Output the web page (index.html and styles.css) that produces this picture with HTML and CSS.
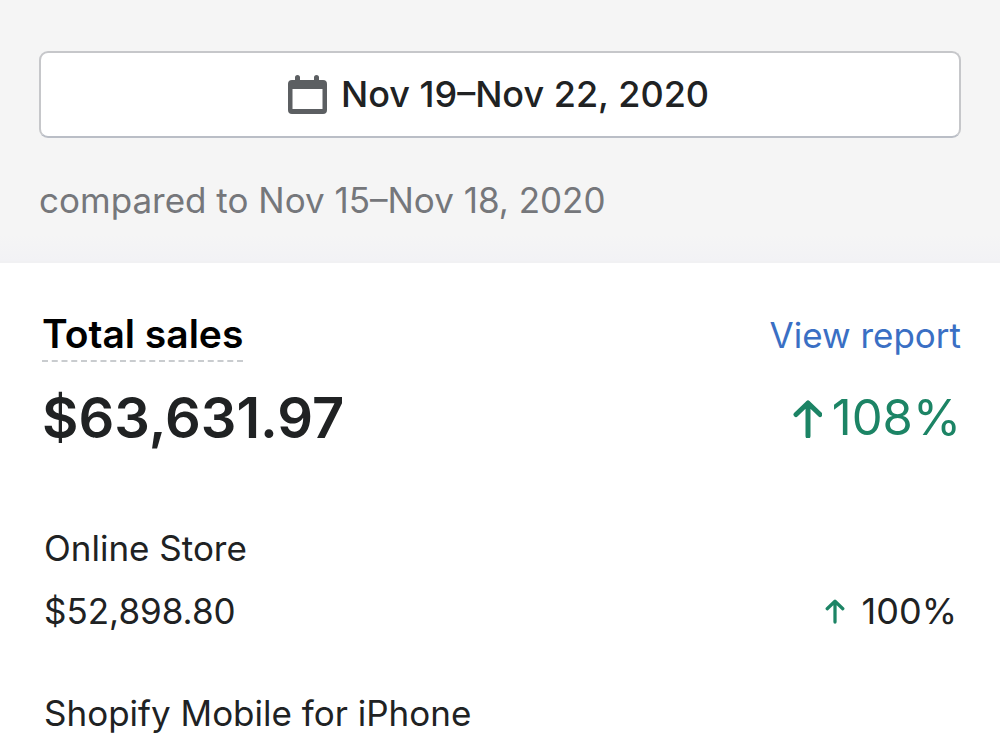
FILE: index.html
```html
<!DOCTYPE html>
<html lang="en">
<head>
    <meta charset="utf-8">
    <title>Analytics</title>
    <link rel="stylesheet" href="styles.css">
</head>
<body>
    <header class="range">
        <button class="date-button" type="button">
            <svg class="calendar" viewBox="0 0 40 40" aria-hidden="true">
                <path fill="#5c5f62" fill-rule="evenodd" d="M8 6V3.500a2.500 2.500 0 0 1 5 0V6h14V3.500a2.500 2.500 0 0 1 5 0V6H36a4 4 0 0 1 4 4v26a4 4 0 0 1-4 4H5a4 4 0 0 1-4-4V10a4 4 0 0 1 4-4zM5.500 15v20h30V15z"/>
            </svg>
            <span>Nov 19–Nov 22, 2020</span>
        </button>
        <p class="compared">compared to Nov 15–Nov 18, 2020</p>
    </header>

    <main class="card">
        <div class="row heading">
            <h2>Total sales</h2>
            <a href="#">View report</a>
        </div>
        <div class="row total">
            <strong>$63,631.97</strong>
            <span class="change">
                <svg class="arrow" viewBox="0 0 30 40" aria-hidden="true">
                    <path d="M16 38V5M4 16.500L16 5l12 11.500" fill="none" stroke="currentColor" stroke-width="5" stroke-linecap="round" stroke-linejoin="round"/>
                </svg>
                108%
            </span>
        </div>

        <section class="channel">
            <h3>Online Store</h3>
            <div class="row">
                <span>$52,898.80</span>
                <span class="change">
                    <svg class="arrow" viewBox="0 0 30 40" aria-hidden="true">
                        <path d="M15 37V5M3 16.500L15 5l12 11.500" fill="none" stroke="currentColor" stroke-width="5" stroke-linecap="round" stroke-linejoin="round"/>
                    </svg>
                    100%
                </span>
            </div>
        </section>
        <section class="channel">
            <h3>Shopify Mobile for iPhone</h3>
        </section>
    </main>
</body>
</html>
```

FILE: styles.css
```css
body {
    margin: 0;
    background: #fff;
    color: #202223;
    font-family: Inter, "Liberation Sans", sans-serif;
    font-size: 35px;
    line-height: 48px;
}
h2, h3, p {
    margin: 0;
}
.range {
    padding: 51px 39px 36px;
    background: linear-gradient(#f5f5f5 90%, #f2f2f5);
    border-bottom: 2px solid #f1f1f3;
}
.date-button {
    display: flex;
    align-items: center;
    justify-content: center;
    gap: 14px;
    width: 100%;
    height: 87px;
    padding: 0 8px 2px 4px;
    background: #fff;
    border: 2px solid #c6c7ca;
    border-bottom-color: #babec6;
    border-radius: 9px;
    color: inherit;
    font: inherit;
    font-size: 36px;
    font-weight: 500;
    cursor: pointer;
}
.calendar {
    width: 40px;
    height: 40px;
}
.compared {
    margin-top: 38px;
    padding-bottom: 1px;
    color: #75777b;
}
.card {
    padding: 45px 39px 12px 42px;
}
.row {
    display: flex;
    justify-content: space-between;
    align-items: center;
}
h2 {
    border-bottom: 2px dashed #c9cccf;
    color: #000;
    font-size: 39px;
    font-weight: 600;
    line-height: 52px;
}
a {
    color: #3a6fc4;
    text-decoration: none;
}
.total {
    margin: 20px 0 70px;
    line-height: 72px;
}
.total strong {
    font-size: 56px;
    font-weight: 600;
}
.change {
    display: flex;
    align-items: center;
    gap: 17px;
    font-size: 36px;
}
.arrow {
    width: 20px;
    height: 26px;
    color: #1c8465;
}
.total .change {
    gap: 10px;
    color: #1c8465;
    font-size: 49px;
}
.total .arrow {
    width: 30px;
    height: 40px;
}
.channel {
    margin-bottom: 54px;
    padding: 0 4px 0 2px;
}
.channel:last-child {
    margin-bottom: 0;
}
h3 {
    margin-bottom: 15px;
    font-size: 35px;
    font-weight: 400;
}
```
